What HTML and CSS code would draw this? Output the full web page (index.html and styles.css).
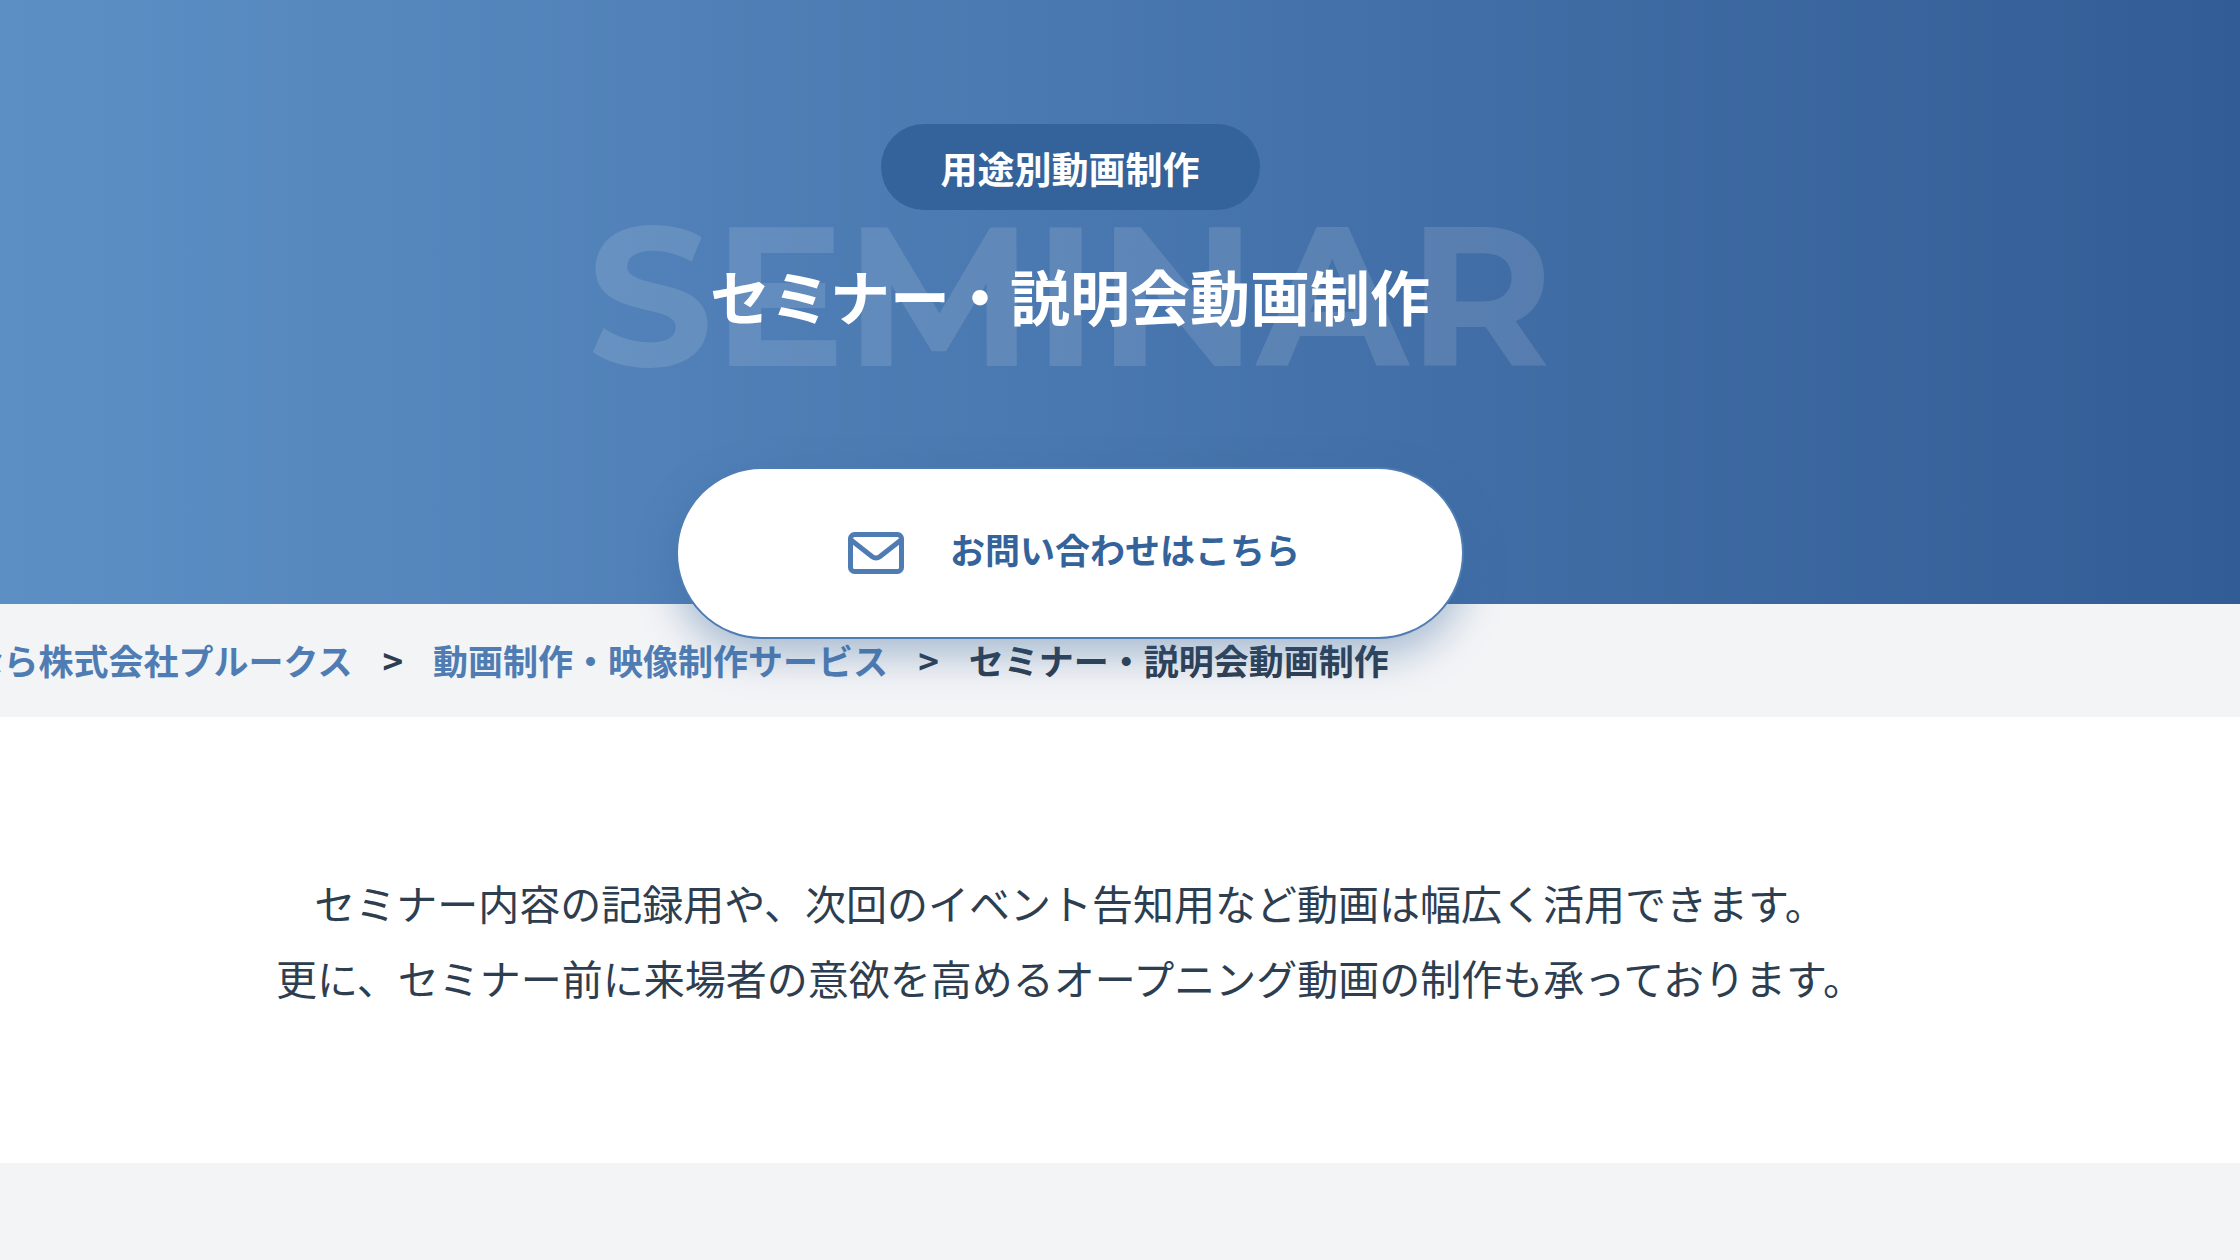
FILE: index.html
```html
<!DOCTYPE html>
<html lang="ja">
<head>
  <meta charset="UTF-8">
  <meta name="viewport" content="width=device-width, initial-scale=1.0">
  <title>セミナー・説明会動画制作</title>
  <link rel="stylesheet" href="styles.css">
</head>
<body>

  <!-- メインビジュアル -->
  <header class="hero">
    <p class="hero-label">用途別動画制作</p>
    <div class="hero-title">
      <span class="hero-en" aria-hidden="true">SEMINAR</span>
      <h1>セミナー・説明会動画制作</h1>
    </div>
    <a href="#" class="contact-btn">
      <svg class="icon-mail" viewBox="0 0 56 42" fill="none" stroke="currentColor" stroke-width="5" stroke-linejoin="round">
        <rect x="2.5" y="2.5" width="51" height="37" rx="4"/>
        <path d="M3 8L24 24.500Q28 27.500 32 24.500L53 8"/>
      </svg>
      <span class="contact-text">お問い合わせはこちら</span>
    </a>
  </header>

  <!-- パンくずリスト -->
  <nav class="breadcrumb">
    <ol>
      <li><a href="#">なら株式会社プルークス</a></li>
      <li><a href="#">動画制作・映像制作サービス</a></li>
      <li>セミナー・説明会動画制作</li>
    </ol>
  </nav>

  <main>
    <section class="lead">
      <p>セミナー内容の記録用や、次回のイベント告知用など動画は幅広く活用できます。<br>
      更に、セミナー前に来場者の意欲を高めるオープニング動画の制作も承っております。</p>
    </section>
    <section class="next"></section>
  </main>

</body>
</html>
```
FILE: styles.css
```css
/* 基本色 */
html {
  --color-text: #2d3e50;
  --color-main: #4f7db3;
  --color-deep: #34639b;
  --color-gray: #f3f4f6;
}

* {
  box-sizing: border-box;
}

body {
  margin: 0;
  min-height: 100vh;
  display: flex;
  flex-direction: column;
  color: var(--color-text);
  font-family: "Noto Sans CJK JP", sans-serif;
  overflow-x: hidden;
}

h1, p, ol {
  margin: 0;
  padding: 0;
}

a {
  text-decoration: none;
}

/* メインビジュアル */
.hero {
  position: relative;
  z-index: 1;
  display: flex;
  flex-direction: column;
  align-items: center;
  padding: 124px 100px 0 0;
  background: linear-gradient(90deg, #5c90c5 0%, #4a78b0 46%, #325c95 100%);
}

.hero-label {
  padding: 17px 60px 15px;
  border-radius: 43px;
  background: var(--color-deep);
  color: #fff;
  font-size: 37px;
  font-weight: 700;
  line-height: 54px;
}

.hero-title {
  position: relative;
  margin-top: 41px;
}

.hero-title h1 {
  position: relative;
  color: #fff;
  font-size: 60px;
  font-weight: 700;
  line-height: 88px;
}

/* タイトル背景の英字 */
.hero-en {
  position: absolute;
  top: 50%;
  left: 50%;
  transform: translate(-50%, -50%);
  color: rgba(255, 255, 255, 0.12);
  font-family: Montserrat, Inter, sans-serif;
  font-size: 197px;
  font-weight: 700;
  line-height: 1;
}

/* お問い合わせボタン */
.contact-btn {
  display: flex;
  align-items: center;
  justify-content: center;
  gap: 46px;
  width: 788px;
  height: 172px;
  margin-top: 128px;
  margin-bottom: -35px;
  padding-left: 8px;
  border: 2px solid var(--color-main);
  border-radius: 86px;
  background: #fff;
  box-shadow: 0 16px 40px rgba(52, 99, 155, 0.4);
  color: #34639b;
  font-size: 35px;
  font-weight: 700;
}

.contact-text {
  padding-bottom: 10px;
}

.icon-mail {
  width: 56px;
  height: 42px;
  color: var(--color-main);
}

/* パンくずリスト */
.breadcrumb {
  padding: 27px 0 29px;
  background: var(--color-gray);
}

.breadcrumb ol {
  display: flex;
  justify-content: flex-end;
  width: 62%;
  list-style: none;
  font-size: 35px;
  font-weight: 700;
  line-height: 57px;
  white-space: nowrap;
}

.breadcrumb li + li::before {
  content: ">";
  margin: 0 30px;
}

.breadcrumb a {
  color: var(--color-main);
}

/* リード文 */
.lead {
  padding: 148px 100px 148px 0;
  background: #fff;
  font-size: 41px;
  line-height: 75px;
  text-align: center;
}

main {
  flex: 1;
  display: flex;
  flex-direction: column;
}

.next {
  flex: 1;
  background: var(--color-gray);
}
```
